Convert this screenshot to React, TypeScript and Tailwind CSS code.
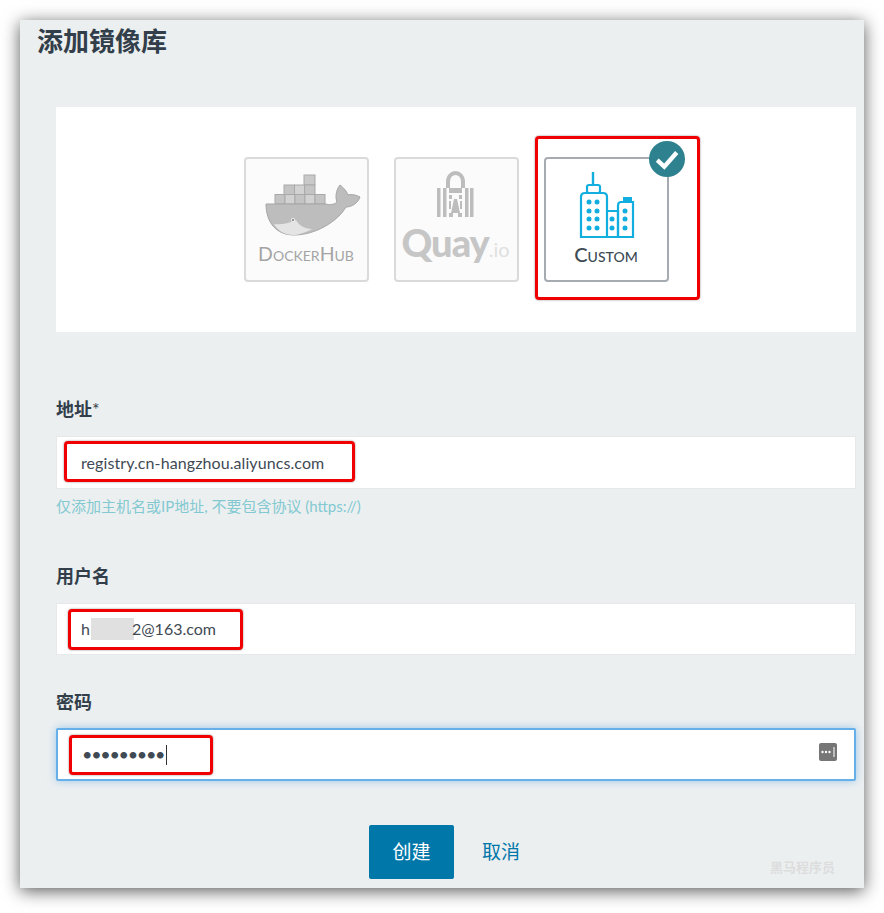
const font = 'font-["Lato","Noto_Sans_CJK_SC",sans-serif]';
const card = 'relative flex h-[125px] w-[125px] flex-col rounded-[4px] border-2';
const field = 'relative flex items-center bg-white pl-[24px] text-[16px] text-[#3f4a54]';
const label = 'block text-[18px] leading-[26px] font-bold text-[#323f4b]';

function WhaleLogo() {
    return (
        <svg className="shrink-0" width="121" height="82" viewBox="2 2 121 82">
            <g fill="#c4c4c4" stroke="#a9a9a9" strokeWidth="1">
                <rect x="60" y="18" width="11" height="10" fill="#c9c9c9" />
                <rect x="40" y="28" width="10.5" height="9.5" />
                <rect x="50.5" y="28" width="10" height="9.5" fill="#d2d2d2" />
                <rect x="60.5" y="28" width="10.5" height="9.5" />
                <rect x="31" y="37.5" width="10" height="9.5" />
                <rect x="41" y="37.5" width="10" height="9.5" fill="#d2d2d2" />
                <rect x="51" y="37.5" width="10" height="9.5" />
                <rect x="61" y="37.5" width="10" height="9.5" fill="#d2d2d2" />
                <rect x="71" y="37.5" width="10" height="9.5" />
            </g>
            <path
                d="M22 47H82C85 48 90 48 93 45C91 40 92 33 96 28C100 31 103 35 104 38C108 37 112 38 116 40C114 46 108 50 102 50C94 64 72 78 50 78C32 78 22 65 22 47Z"
                fill="#bdbdbd"
                stroke="#a6a6a6"
                strokeWidth="1"
            />
            <path d="M30 67C38 68 46 66 52 63C55 69 62 72 68 72C60 76 54 78 49 78C41 78 34 74 30 67Z" fill="#e4e4e4" />
            <circle cx="49" cy="63" r="2" fill="#efefef" />
            <circle cx="49" cy="63" r="1" fill="#777" />
        </svg>
    );
}

function QuayLogo() {
    return (
        <svg className="shrink-0" width="121" height="60" viewBox="2 2 121 60">
            <path d="M54 31V25C54 13 69 13 69 25V31" fill="none" stroke="#bdbdbd" strokeWidth="4" />
            <g fill="#bdbdbd">
                <rect x="43" y="31" width="3.5" height="29" />
                <rect x="49" y="31" width="3.5" height="29" />
                <rect x="55" y="31" width="13" height="5" />
                <rect x="55" y="38" width="3" height="4" />
                <rect x="65" y="38" width="3" height="4" />
                <path d="M60 42H63L66 56H57Z" />
                <rect x="55" y="44" width="2" height="8" />
                <rect x="66" y="44" width="2" height="8" />
                <rect x="55" y="56" width="4" height="4" />
                <rect x="64" y="56" width="4" height="4" />
                <rect x="71" y="31" width="3.5" height="29" />
                <rect x="76" y="31" width="3.5" height="29" />
            </g>
        </svg>
    );
}

function BuildingLogo() {
    const dots = [
        [45, 45], [53, 45], [45, 54], [53, 54], [45, 62], [53, 62], [45, 71], [53, 71],
        [68, 62], [68, 71], [81, 54], [81, 62], [81, 71],
    ];

    return (
        <svg className="shrink-0" width="121" height="80" viewBox="2 2 121 80">
            <g fill="none" stroke="#12aedf" strokeWidth="2.2">
                <path d="M49 15V28" strokeWidth="2.4" />
                <rect x="43" y="28" width="13" height="8" rx="2" />
                <path d="M37 80V40Q37 36 41 36H59Q63 36 63 40V80Z" />
                <path d="M63 54H74V80" />
                <path d="M74 80V49Q74 45 77 45H89V80H37" />
            </g>
            <rect x="79" y="40" width="9" height="5" fill="#12aedf" />
            {dots.map(([cx, cy]) => (
                <circle key={`${cx}-${cy}`} cx={cx} cy={cy} r="2.5" fill="#12aedf" />
            ))}
        </svg>
    );
}

function RedBox({className}: {className: string}) {
    return (
        <div className={`absolute rounded-[4px] border-[3px] border-[#f00000] shadow-[0_0_2px_rgba(0,0,0,0.5)] ${className}`} />
    );
}

export default function App() {
    return (
        <div className={`h-[913px] w-[884px] overflow-hidden bg-white p-[20px] ${font}`}>
            <div className="relative h-[868px] w-[844px] bg-[#eceff0] pr-[8px] pl-[36px] shadow-[0_3px_16px_rgba(0,0,0,0.65)]">
                <h1 className="ml-[-19px] pt-[3px] text-[26px] leading-[36px] font-bold text-[#323f4b]">添加镜像库</h1>

                <div className="mt-[48px] flex h-[225px] justify-center gap-[25px] bg-white pt-[50px]">
                    <div className={`${card} border-[#dadada] bg-[#fbfbfb]`}>
                        <WhaleLogo />
                        <div className="mt-[-1px] text-center text-[19.5px] leading-[28px] text-[#a4a4a4] [font-variant:small-caps]">DockerHub</div>
                    </div>
                    <div className={`${card} border-[#dadada] bg-[#fbfbfb]`}>
                        <QuayLogo />
                        <div className="mt-[1px] pl-[6px] text-[38px] leading-[44px] font-black tracking-[-1px] text-[#c6c6c6]">
                            Quay<span className="text-[20px] font-normal tracking-normal text-[#e0e0e0]">.io</span>
                        </div>
                    </div>
                    <div className={`${card} border-[#a5abb0] bg-white`}>
                        <BuildingLogo />
                        <div className="mt-[1px] text-center text-[20px] leading-[28px] font-medium text-[#3c4a54] [font-variant:small-caps]">Custom</div>
                        <RedBox className="top-[-23px] left-[-11px] h-[164px] w-[165px]" />
                        <div className="absolute top-[-18px] left-[103px] flex h-[36px] w-[36px] items-center justify-center rounded-full bg-[#2e8290]">
                            <svg width="26" height="26" viewBox="0 0 24 24" fill="none" stroke="#fff" strokeWidth="4">
                                <path d="M3 13L9.5 19L21 6" />
                            </svg>
                        </div>
                    </div>
                </div>

                <label className={`mt-[64px] ${label}`}>
                    地址<span className="font-normal">*</span>
                </label>
                <div className={`${field} mt-[14px] h-[53px] border border-[#e6e8ea] tracking-[0.09px]`}>
                    registry.cn-hangzhou.aliyuncs.com
                    <RedBox className="top-[4px] left-[7px] h-[41px] w-[291px]" />
                </div>
                <p className="mt-[7px] text-[15px] leading-[20px] text-[#82c9d1]">仅添加主机名或IP地址, 不要包含协议 (https://)</p>

                <label className={`mt-[47px] ${label}`}>用户名</label>
                <div className={`${field} mt-[14px] h-[52px] border border-[#e6e8ea]`}>
                    <span>h</span>
                    <span className="ml-[1px] h-[22px] w-[43px] bg-[#e0e0e0]" />
                    <span className="ml-[-2px]">2@163.com</span>
                    <RedBox className="top-[5px] left-[11px] h-[41px] w-[175px]" />
                </div>

                <label className={`mt-[34px] ${label}`}>密码</label>
                <div className={`${field} mt-[13px] h-[53px] rounded-[2px] border-2 border-[#66afe9] shadow-[0_0_8px_rgba(102,175,233,0.6)]`}>
                    <span className="text-[18px] tracking-[-1.3px]">•••••••••</span>
                    <span className="ml-[2px] h-[20px] w-px bg-[#333]" />
                    <svg className="absolute top-[13px] right-[17px]" width="18" height="18" viewBox="0 0 18 18">
                        <rect width="18" height="18" rx="2" fill="#767676" />
                        <circle cx="3.5" cy="9" r="1.2" fill="#fff" />
                        <circle cx="7" cy="9" r="1.2" fill="#fff" />
                        <circle cx="10.5" cy="9" r="1.2" fill="#fff" />
                        <rect x="14.5" y="4" width="1" height="10" fill="#fff" />
                    </svg>
                    <RedBox className="top-[5px] left-[11px] h-[40px] w-[144px]" />
                </div>

                <div className="mt-[44px] flex items-center pl-[313px]">
                    <button className="h-[54px] w-[85px] rounded-[2px] bg-[#0077a9] text-[19px] text-white">创建</button>
                    <button className="ml-[28px] text-[19px] text-[#0077a9]">取消</button>
                </div>

                <div className="absolute right-[29px] bottom-[13px] text-[13px] leading-[16px] font-bold text-[#dcdddd]">黑马程序员</div>
            </div>
        </div>
    );
}
